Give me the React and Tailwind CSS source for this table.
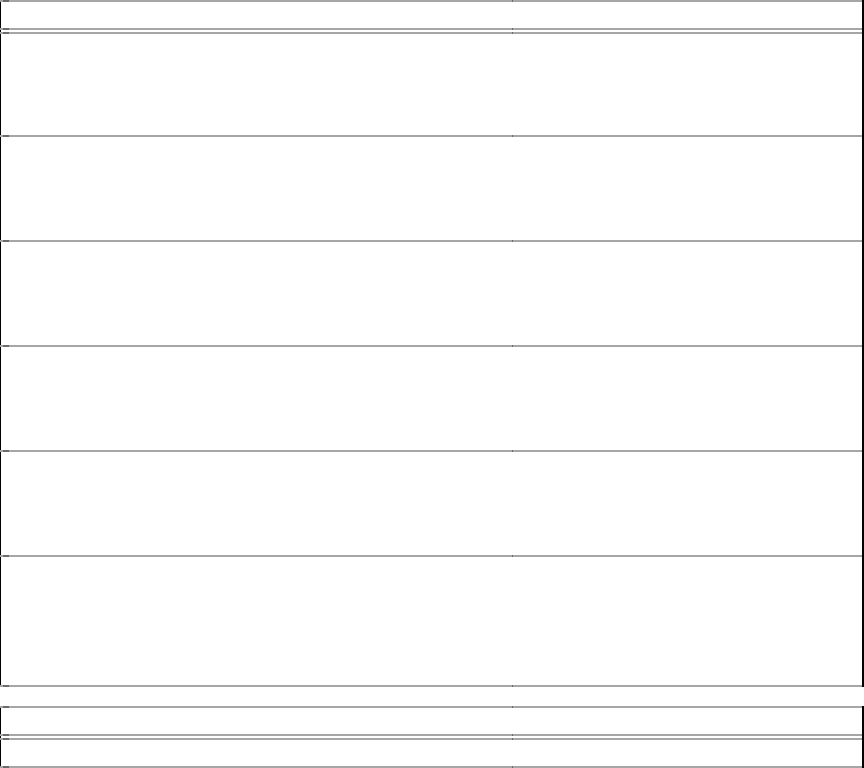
import React from 'react';

// horizontal rule of the grid: light gray with dark ticks at the left and at the column split
function Rule() {
  return (
    <div className="flex h-[2px] w-[862px]">
      <div className="w-[3px] bg-[#a6a6a6]"></div>
      <div className="w-[6px] bg-[#6b6b6b]"></div>
      <div className="w-[503px] bg-[#a6a6a6]"></div>
      <div className="w-px bg-[#6b6b6b]"></div>
      <div className="flex-1 bg-[#a6a6a6]"></div>
    </div>
  );
}

function Row({ height }) {
  return (
    <div className="flex w-[862px] border-l border-black" style={{ height }}>
      <div className="w-[511px]"></div>
      <div className="flex-1"></div>
    </div>
  );
}

function Table({ rows }) {
  return (
    <div className="w-[864px] border-r-2 border-black">
      <Rule />
      {/* Header */}
      <Row height={26} />
      <Rule />
      <Row height={2} />
      <Rule />

      {/* Body */}
      {rows.map((h, i) => (
        <div key={i}>
          <Row height={h} />
          <Rule />
        </div>
      ))}
    </div>
  );
}

export default function App() {
  return (
    <div className="w-[864px] h-[768px] bg-white overflow-hidden">
      <Table rows={[101, 103, 103, 103, 103, 128]} />
      <div className="h-[19px]"></div>
      <Table rows={[26]} />
    </div>
  );
}
